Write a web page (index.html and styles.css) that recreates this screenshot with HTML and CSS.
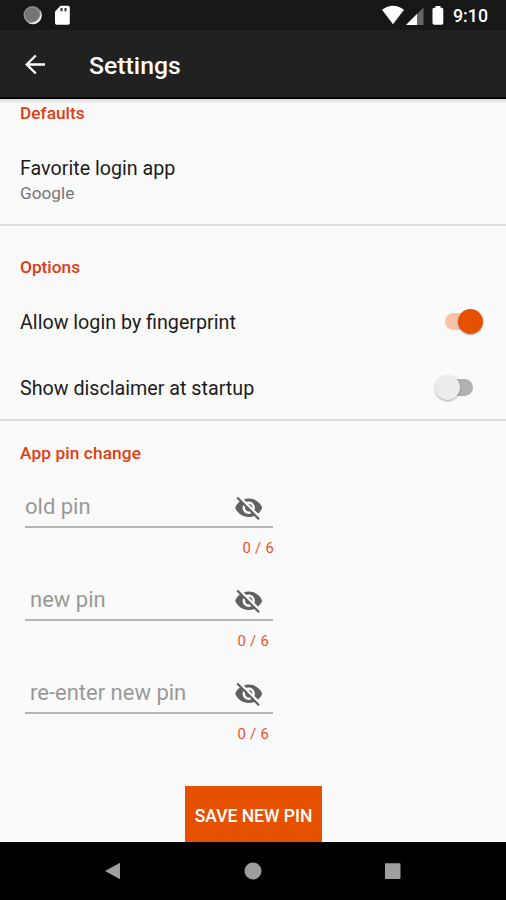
FILE: index.html
```html
<!DOCTYPE html>
<html lang="en">
<head>
<meta charset="utf-8">
<title>Settings</title>
<link rel="stylesheet" href="styles.css">
</head>
<body>
<svg class="defs" width="0" height="0">
  <symbol id="eye-off" viewBox="0 0 24 24"><path d="M12 7c2.76 0 5 2.24 5 5 0 .65-.13 1.26-.36 1.83l2.92 2.92c1.51-1.26 2.7-2.89 3.43-4.75-1.73-4.39-6-7.5-11-7.5-1.4 0-2.74.25-3.98.7l2.16 2.16C10.74 7.13 11.35 7 12 7zM2 4.27l2.28 2.28.46.46C3.08 8.3 1.78 10.02 1 12c1.73 4.39 6 7.5 11 7.5 1.55 0 3.03-.3 4.38-.84l.42.42L19.73 22 21 20.73 3.27 3 2 4.27zM7.53 9.8l1.55 1.55c-.05.21-.08.43-.08.65 0 1.66 1.34 3 3 3 .22 0 .44-.03.65-.08l1.55 1.55c-.67.33-1.41.53-2.2.53-2.76 0-5-2.24-5-5 0-.79.2-1.53.53-2.2zm4.31-.78l3.15 3.15.02-.16c0-1.66-1.34-3-3-3l-.17.01z"/></symbol>
</svg>
<div class="screen">
  <div class="status-bar">
    <svg class="status-left" width="60" height="30" viewBox="0 0 60 30">
      <circle cx="18.5" cy="15" r="9" fill="#8d8d8d"/>
      <path d="M25.8 9.5a9 9 0 0 1-12.5 12.800a9.800 9.800 0 0 0 12.500-12.800z" fill="#eee"/>
      <circle cx="18" cy="14.5" r="7" fill="#747474"/>
      <path d="M46.500 5.800H54q1.800 0 1.800 1.800V23q0 1.800-1.800 1.800H42.800Q41 24.800 41 23V11.500z" fill="#fff"/>
      <path d="M47.500 8v3.300M51.500 8v3.300" stroke="#333" stroke-width="2"/>
    </svg>
    <svg class="status-right" width="66" height="30" viewBox="0 0 66 30">
      <path d="M1 9.800Q12 1.800 23 9.800L12 24.200z" fill="#fff"/>
      <path d="M42.500 7.500V25H25z" fill="#666"/>
      <path d="M36 14V25H25z" fill="#fff"/>
      <path d="M54.500 6h5v1.800h1.200q1.600 0 1.600 1.600V23q0 1.800-1.800 1.800h-7.200q-1.800 0-1.800-1.800V9.400q0-1.600 1.600-1.600h1.400z" fill="#fff"/>
    </svg>
    <span class="clock">9:10</span>
  </div>
  <header class="app-bar">
    <svg class="back" width="22" height="22" viewBox="0 0 22 22" fill="none" stroke="#fff" stroke-width="2.400"><path d="M20 10.500H2M10.800 1.500L1.800 10.500l9 9"/></svg>
    <h1>Settings</h1>
  </header>
  <main>
    <section class="group defaults">
      <h2>Defaults</h2>
      <div class="label">Favorite login app</div>
      <div class="summary">Google</div>
    </section>
    <section class="group options">
      <h2>Options</h2>
      <div class="row"><span class="label">Allow login by fingerprint</span><span class="switch on"></span></div>
      <div class="row"><span class="label">Show disclaimer at startup</span><span class="switch"></span></div>
    </section>
    <section class="pins">
      <h2>App pin change</h2>
      <div class="field first"><div class="input"><span>old pin</span><svg class="eye"><use href="#eye-off"/></svg></div><div class="counter">0 / 6</div></div>
      <div class="field"><div class="input"><span>new pin</span><svg class="eye"><use href="#eye-off"/></svg></div><div class="counter">0 / 6</div></div>
      <div class="field"><div class="input"><span>re-enter new pin</span><svg class="eye"><use href="#eye-off"/></svg></div><div class="counter">0 / 6</div></div>
      <button class="save">SAVE NEW PIN</button>
    </section>
  </main>
  <nav class="nav-bar">
    <svg width="18" height="18" viewBox="0 0 18 18"><path d="M1 9L16 .8V17.200z"/></svg>
    <svg width="18" height="18" viewBox="0 0 18 18"><circle cx="9" cy="9" r="8.500"/></svg>
    <svg width="18" height="18" viewBox="0 0 18 18"><rect x="1" y="1.200" width="15.500" height="15.800" rx=".7"/></svg>
  </nav>
</div>
</body>
</html>
```
FILE: styles.css
```css
* { box-sizing: border-box; }
body { margin: 0; font-family: Roboto, sans-serif; background: #fafafa; }
.defs { display: none; }
.screen { width: 506px; height: 900px; display: flex; flex-direction: column; overflow: hidden; }
.status-bar { height: 30px; flex: none; display: flex; background: #171717; padding-left: 14px; }
.status-right { margin-left: 307px; display: block; }
.clock { margin-left: 6px; color: #fff; font-size: 17.800px; font-weight: 500; line-height: 32px; }
.app-bar { height: 69px; flex: none; display: flex; align-items: center; background: #212121; border-bottom: 2px solid #050505; padding: 2px 0 0 25px; }
h1 { margin: 2px 0 0 42px; font-size: 24.800px; line-height: 30px; font-weight: 500; color: #fff; }
main { flex: none; height: 743px; overflow: hidden; background: linear-gradient(#d8d8d8, #fafafa 5px); }
h2 { margin: 0; font-size: 17.300px; line-height: 20px; font-weight: 500; color: #e03d12; }
.group { border-bottom: 2px solid #dedede; }
.defaults { height: 127px; padding: 4px 20px 0; }
.label { font-size: 19.700px; line-height: 24px; color: #1c1c1c; }
.defaults .label { margin-top: 34px; }
.summary { font-size: 17.200px; line-height: 20px; margin-top: 2px; color: #757575; }
.options { height: 195px; padding: 31px 20px 0; }
.row { height: 66px; display: flex; align-items: center; justify-content: space-between; }
.options h2 { margin-bottom: 13px; }
.switch { width: 50px; height: 30px; display: flex; align-items: center; margin-right: 2px; padding-left: 1px; margin-top: -3px; }
.switch::before { content: ""; width: 25px; height: 25px; border-radius: 50%; background: #ececec; box-shadow: 0 1px 2px #0005; z-index: 1; }
.switch::after { content: ""; width: 30px; height: 17px; border-radius: 9px; background: #b0b0b0; margin-left: -17px; }
.switch.on { flex-direction: row-reverse; padding: 0 1px 0 0; }
.switch.on::before { background: #e65100; }
.switch.on::after { background: #f6c3a6; margin: 0 -17px 0 0; }
.pins { padding: 22px 20px 0; display: flex; flex-direction: column; }
.pins h2 { letter-spacing: .1px; }
.field { width: 248px; height: 93px; margin-left: 5px; }
.field:first-of-type { margin-top: 20px; }
.input { height: 45px; border-bottom: 2px solid #b5b5b5; display: flex; align-items: center; justify-content: space-between; padding: 4px 10px 0 5px; font-size: 22px; color: #999; }
.eye { width: 29.500px; height: 29.500px; fill: #606060; margin-top: 3px; }
.counter { font-size: 14.800px; line-height: 18px; margin: 11px 4px 0 0; text-align: right; color: #f0512c; letter-spacing: .3px; }
.first .input { padding-left: 0; }
.first .counter { margin-right: -1px; }
.save { width: 137px; height: 60px; flex: none; margin: 24px 0 0 165px; padding: 0; border: 0; background: #e65100; color: #fff; font: 500 17.500px/20px Roboto, sans-serif; }
.nav-bar { height: 58px; flex: none; display: flex; justify-content: center; gap: 122px; padding-top: 20px; background: #000; fill: #9e9e9e; }
```
